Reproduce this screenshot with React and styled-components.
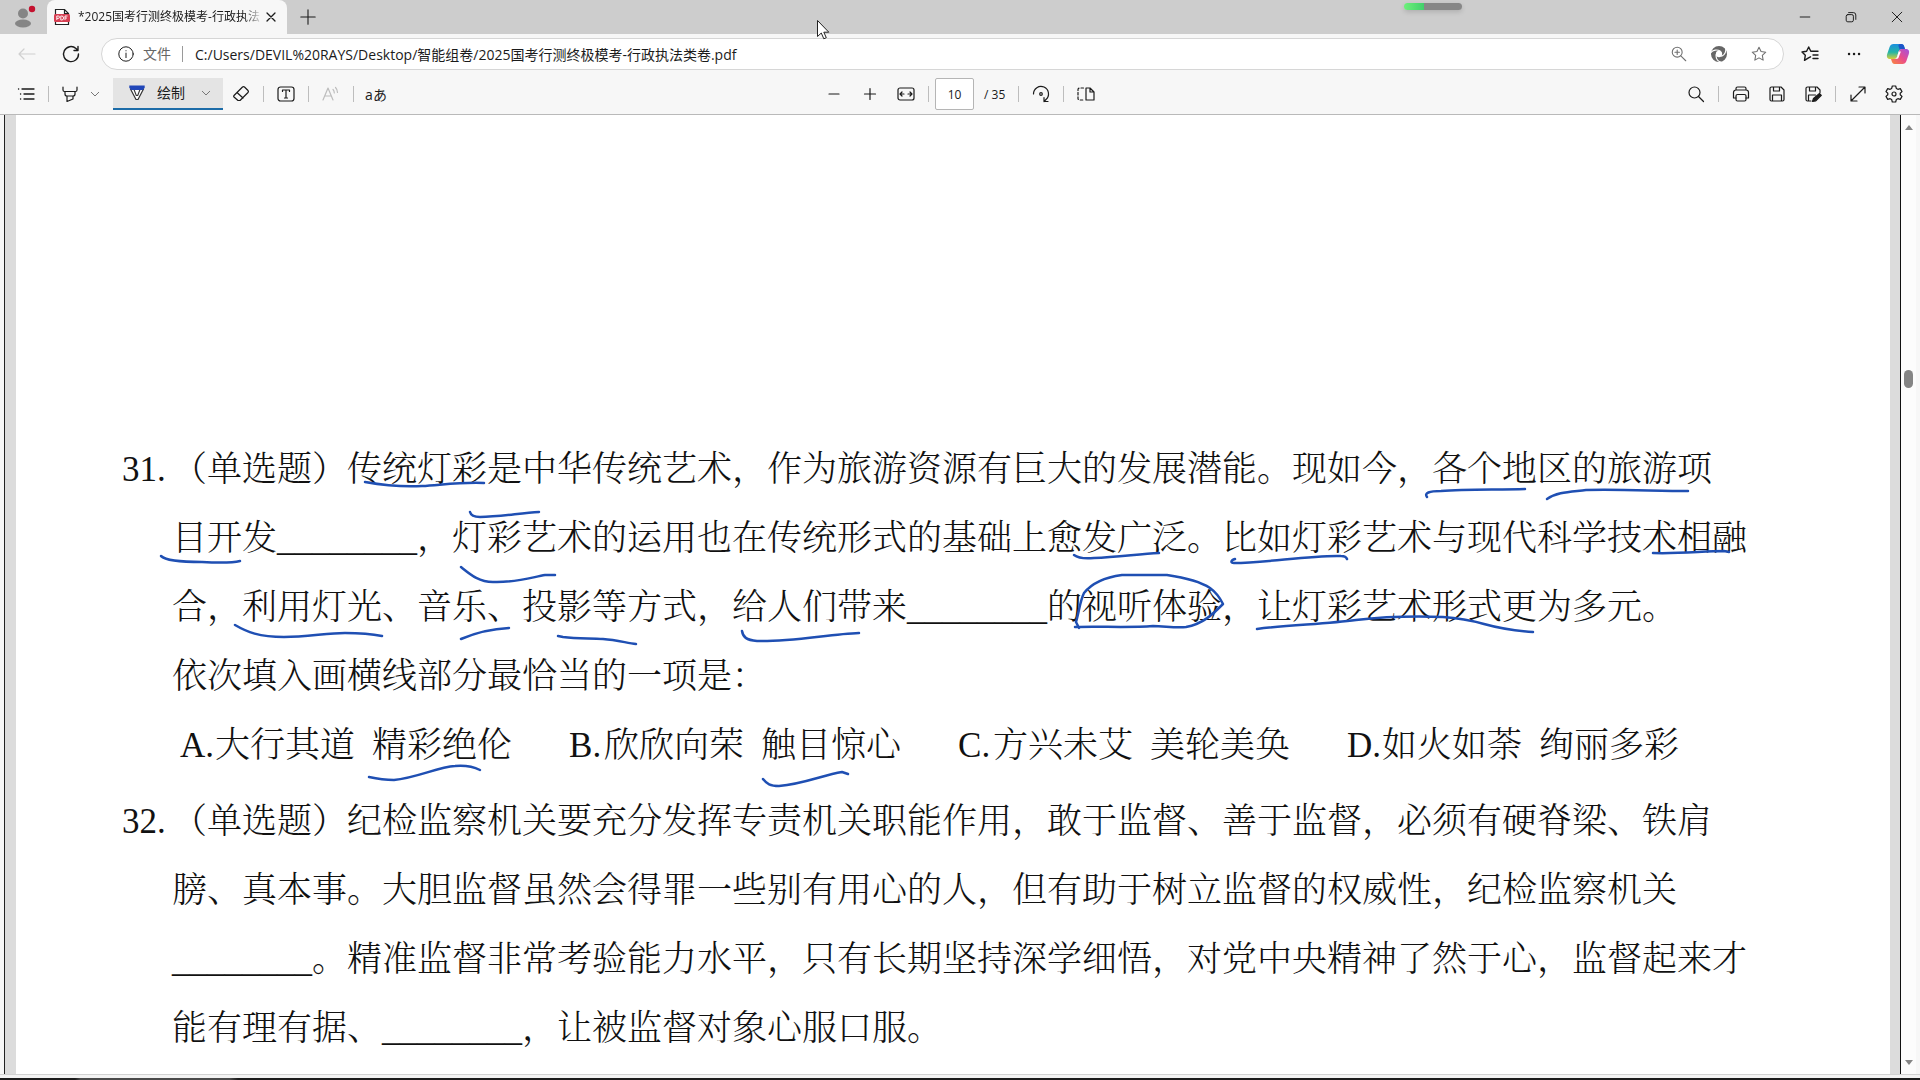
import React from 'react';
import styled, { createGlobalStyle } from 'styled-components';

const GlobalStyle = createGlobalStyle`
    * {
        box-sizing: border-box;
    }
    body {
        margin: 0;
        background: #f7f7f7;
        color: #1b1b1b;
        font-family: "Open Sans", "Noto Sans CJK SC", sans-serif;
        font-size: 14px;
    }
    button, input {
        font: inherit;
        color: inherit;
    }
`;

const Shell = styled.div`
    display: flex;
    flex-direction: column;
    min-height: 100vh;
    position: relative;
    overflow: hidden;
`;

const TitleBar = styled.header`
    display: flex;
    height: 34px;
    background: #cdcdcd;
`;

const PlainButton = styled.button`
    display: flex;
    align-items: center;
    justify-content: center;
    flex: none;
    padding: 0;
    border: 0;
    background: transparent;
    color: ${props => props.$tone || '#1b1b1b'};
`;

const ProfileButton = styled(PlainButton)`
    width: 47px;
`;

const Tab = styled.div`
    display: flex;
    align-items: center;
    width: 240px;
    padding: 0 8px 0 7px;
    background: #f7f7f7;
    border-radius: 8px 8px 0 0;
`;

const TabTitle = styled.span`
    flex: 1;
    margin-left: 8px;
    white-space: nowrap;
    font-size: 12px;
    line-height: 20px;
    mask-image: linear-gradient(to right, #000 90%, transparent);
`;

const NewTabButton = styled(PlainButton)`
    width: 42px;
`;

const WindowControls = styled.div`
    display: flex;
    margin-left: auto;
`;

const WindowButton = styled(PlainButton)`
    width: 46px;
`;

const AddressRow = styled.div`
    display: flex;
    align-items: center;
    gap: 8px;
    height: 38px;
    padding: 2px 4px 0 9px;
`;

const NavButton = styled(PlainButton)`
    width: 36px;
    height: 32px;
`;

const AddressBox = styled.div`
    display: flex;
    align-items: center;
    flex: 1;
    height: 32px;
    margin-left: 4px;
    padding: 0 4px 0 15px;
    background: #fff;
    border: 1px solid #d6d6d6;
    border-radius: 16px;
`;

const Origin = styled.span`
    margin-left: 8px;
    padding-right: 11px;
    border-right: 1px solid #9a9a9a;
    color: #666;
    font-size: 14px;
    line-height: 16px;
`;

const AddressInput = styled.input`
    flex: 1;
    min-width: 0;
    margin-left: 12px;
    padding: 0;
    border: 0;
    outline: 0;
    background: transparent;
    font-size: 14px;
`;

const AddressAction = styled(PlainButton)`
    width: 40px;
    height: 28px;
`;

const ToolBar = styled.div`
    display: grid;
    grid-template-columns: 1fr auto 1fr;
    align-items: center;
    height: 43px;
    padding: 2px 8px 0;
    border-bottom: 1px solid #b9b9b9;
`;

const ToolGroup = styled.div`
    display: flex;
    align-items: center;
    justify-content: ${props => props.$align || 'flex-start'};
`;

const ToolButton = styled(PlainButton)`
    width: 36px;
    height: 32px;
`;

const HighlightButton = styled(ToolButton)`
    width: 34px;
`;

const ChevronButton = styled(PlainButton)`
    width: 16px;
    height: 32px;
    margin-right: 10px;
`;

const DrawButton = styled(PlainButton)`
    justify-content: flex-start;
    gap: 10px;
    width: 110px;
    height: 32px;
    padding: 0 12px 0 14px;
    background: #e4e4e4;
    border-bottom: 2px solid #1c6ca8;
    line-height: 20px;

    & > :last-child {
        margin-left: auto;
    }
`;

const Divider = styled.span`
    width: 1px;
    height: 16px;
    margin: 0 4px;
    background: #bdbdbd;
`;

const PageInput = styled.input`
    width: 39px;
    height: 32px;
    margin-left: 2px;
    padding: 0;
    border: 1px solid #b5b5b5;
    border-radius: 2px;
    background: #fff;
    text-align: center;
    font-size: 12px;
`;

const PageTotal = styled.span`
    width: 40px;
    padding-left: 10px;
    font-size: 12px;
`;

const Viewer = styled.main`
    display: flex;
    flex: 1;
    margin: 0 4px 0 4px;
    border-left: 1px solid #222;
    background: #dcdcdc;
`;

const Page = styled.article`
    flex: 1;
    position: relative;
    margin: 0 10px 0 11px;
    padding: 320px 100px 0 106px;
    background: #fff;
    color: #111;
    font-family: "Liberation Serif", "Noto Serif CJK SC", "Noto Sans CJK SC", serif;
    font-size: 35px;
    font-weight: 300;
    line-height: 69px;
    text-spacing-trim: space-all;
    white-space: nowrap;
`;

const Question = styled.section`
    display: grid;
    grid-template-columns: 50px 1fr;
    margin-bottom: 7px;
`;

const QuestionText = styled.p`
    margin: 0;
`;

const Line = styled.span`
    display: block;
`;

const Options = styled.ul`
    display: flex;
    grid-column: 1 / -1;
    gap: 57px;
    margin: 0;
    padding: 0 0 0 58px;
    list-style: none;
`;

const Option = styled.li`
    display: flex;
`;

const OptionLetter = styled.span`
    width: 35px;
`;

const OptionWord = styled.span`
    margin-right: ${props => (props.$last ? '0' : '17px')};
`;

const Ink = styled.svg`
    position: absolute;
    top: 0;
    left: 0;
    pointer-events: none;
`;

const ScrollBar = styled.div`
    display: flex;
    flex-direction: column;
    align-items: center;
    width: 16px;
    padding: 9px 0 8px;
    background: #fcfcfc;
    border-left: 1px solid #111;
`;

const ScrollThumb = styled.div`
    width: 9px;
    height: 18px;
    margin: 240px 0 auto;
    border-radius: 5px;
    background: #858585;
`;

const BottomEdge = styled.div`
    height: 4px;
    background: #f3f3f3;
    border-top: 1px solid #d2d2d2;
`;

const TaskBarEdge = styled.div`
    height: 2px;
    background: linear-gradient(to right, #1c1c1c 75px, #4a4a4a 80px, #4a4a4a 230px, #1c1c1c 238px);
`;

const Meter = styled.div`
    position: absolute;
    top: 3px;
    left: 1404px;
    width: 58px;
    height: 7px;
    border-radius: 4px;
    background: linear-gradient(to right, #6df07a, #42cf6c 20px, #878787 20px);
    box-shadow: 0 2px 5px rgba(0, 0, 0, 0.15);
`;

const Cursor = styled.svg`
    position: absolute;
    top: 19px;
    left: 816px;
`;

const Icon = ({ size = 20, width = 1.2, children }) => (
    <svg
        width={size}
        height={size}
        viewBox="0 0 20 20"
        fill="none"
        stroke="currentColor"
        strokeWidth={width}
        strokeLinecap="round"
        strokeLinejoin="round"
        aria-hidden="true"
    >
        {children}
    </svg>
);

const Chevron = () => (
    <svg width="10" height="10" viewBox="0 0 10 10" fill="none" stroke="#777" aria-hidden="true">
        <path d="M1 3l4 4 4-4" />
    </svg>
);

const Avatar = () => (
    <svg width="24" height="24" viewBox="0 0 24 24" aria-hidden="true">
        <circle cx="11" cy="8.500" r="5" fill="#858585" />
        <ellipse cx="11" cy="18.500" rx="8" ry="4" fill="#858585" />
        <circle cx="20" cy="4" r="3.200" fill="#c4122f" />
    </svg>
);

const PdfIcon = () => (
    <svg width="16" height="18" viewBox="0 0 16 18" aria-hidden="true">
        <path d="M1.500 16.500v-15h9l4 4v11z" fill="#fff" stroke="#222" strokeWidth="1.200" />
        <path d="M10.500 1.500v4h4" fill="none" stroke="#222" strokeWidth="1.200" />
        <rect x="0" y="6" width="16" height="8" rx="1.500" fill="#d63f52" />
        <path
            d="M2.800 12V8h1.500a1.200 1.200 0 010 2.400H2.800M6.800 8v4h.8a2 2 0 000-4zM11 12V8h2.500M11 10h2"
            fill="none"
            stroke="#fff"
            strokeWidth=".9"
        />
    </svg>
);

const PenIcon = () => (
    <svg width="20" height="20" viewBox="0 0 20 20" strokeLinejoin="round" aria-hidden="true">
        <path d="M3.500 6L9 16.500h2L16.500 6z" fill="#fff" stroke="#333" strokeWidth="1.200" />
        <path d="M7 6.500l2.300 6h1.400l2.300-6" fill="none" stroke="#333" strokeWidth="1.100" />
        <path d="M2.300 2.500h15.400v2.200L16 7H4L2.300 4.700z" fill="#2146b8" />
    </svg>
);

const SwirlIcon = () => (
    <svg width="18" height="18" viewBox="0 0 20 20" aria-hidden="true">
        <circle cx="10" cy="10" r="6.200" fill="none" stroke="currentColor" strokeWidth="5.400" />
        <g fill="none" stroke="#fff" strokeWidth="1.300" strokeLinecap="round">
            <path d="M.8 8.500C3 5.500 8 4.500 11.500 6.800" />
            <path d="M17.300 2.800C18.500 7 16.500 11 13 12.500" />
            <path d="M12.500 19.300C8.500 18 6.300 14.500 6.900 10.500" />
        </g>
    </svg>
);

const CopilotIcon = () => (
    <svg width="24" height="24" viewBox="0 0 24 24" aria-hidden="true">
        <defs>
            <linearGradient id="cool" x1="0" y1="0" x2="0" y2="1">
                <stop offset="0" stopColor="#1b8fe0" />
                <stop offset=".55" stopColor="#25b5a6" />
                <stop offset="1" stopColor="#d8cf38" />
            </linearGradient>
            <linearGradient id="warm" x1="1" y1="0" x2="0" y2="1">
                <stop offset="0" stopColor="#a152e0" />
                <stop offset=".5" stopColor="#ea4b8b" />
                <stop offset="1" stopColor="#f98a3c" />
            </linearGradient>
        </defs>
        <path d="M7.500 2h8c1.500 0 2.200 1 2.600 2.200L19 7h-3c-2 0-2.800 1-3.300 2.600l-1.500 4.600C10.700 16 9.700 17 8 17H4c-3 0-3.600-2.500-2.800-5L3.600 5C4.300 3 5.500 2 7.500 2z" fill="url(#cool)" />
        <path d="M14 2h1.500c1.500 0 2.200 1 2.600 2.200L19 7h-3c-1 0-1.700.3-2.200.9L12.500 4C12.200 3 12.800 2 14 2z" fill="#1d55c8" />
        <path d="M16.500 22h-8C7 22 6.300 21 5.900 19.800L5 17h3c2 0 2.800-1 3.300-2.600l1.500-4.600C13.300 8 14.300 7 16 7h4c3 0 3.600 2.500 2.800 5l-2.400 7c-.7 2-1.900 3-3.900 3z" fill="url(#warm)" />
        <path d="M12.700 9.600h2.200l-2.300 6c-.4 1-1 1.400-2 1.400H9.400c1-.5 1.500-1.400 1.800-2.600z" fill="#fff" />
    </svg>
);

const strokes = [
    'M365 482C382 485 403 487 422 486S460 482 484 483',
    'M470 512C471 516 474 517 480 517C500 517 520 513 539 512',
    'M161 556C166 561 185 562 202 562C220 563 232 563 240 561',
    'M461 567C471 575 479 582 493 582C515 583 533 577 545 575L555 575',
    'M235 625C247 632 259 637 284 637C307 637 327 633 345 633C360 633 372 634 382 636',
    'M461 639C475 633 489 629 509 628',
    'M558 636L563 637C578 639 591 638 603 639C617 640 627 643 636 644',
    'M369 777C378 779 386 780 394 780C416 778 438 767 455 766C466 765 474 767 480 770',
    'M1074 555C1078 558 1084 559 1094 558C1118 557 1139 554 1159 553',
    'M1235 559C1231 560 1230 563 1234 563C1266 563 1310 555 1341 556Q1346 556 1347 559',
    'M742 631C743 637 746 640 757 641C790 642 830 634 859 633',
    'M1079 628L1076 622C1079 612 1080 601 1084 593C1092 583 1107 577 1122 575L1167 575C1187 578 1201 582 1210 588C1217 593 1220 598 1223 604C1213 614 1203 624 1186 627C1175 628 1164 626 1153 626C1128 628 1098 626 1075 627',
    'M1257 629C1287 625 1326 624 1356 620C1382 617 1415 616 1443 617C1459 618 1470 620 1484 624C1502 629 1518 631 1533 632',
    'M763 779C767 784 770 786 779 786C804 784 823 775 842 772L848 774',
    'M1427 497C1424 493 1429 491 1441 491C1467 489 1499 490 1525 489',
    'M1547 499C1557 492 1570 492 1586 490C1618 489 1657 491 1688 491',
    'M1653 553C1679 554 1704 551 1724 551L1729 552',
];

const Annotations = () => (
    <Ink width="1874" height="900" viewBox="16 115 1874 900" aria-hidden="true">
        <g fill="none" stroke="#1f4fb3" strokeWidth="2.500" strokeLinecap="round" strokeLinejoin="round">
            {strokes.map(d => <path key={d} d={d} />)}
        </g>
    </Ink>
);

const questions = [
    {
        number: '31.',
        lines: [
            '（单选题）传统灯彩是中华传统艺术，作为旅游资源有巨大的发展潜能。现如今，各个地区的旅游项',
            '目开发________，灯彩艺术的运用也在传统形式的基础上愈发广泛。比如灯彩艺术与现代科学技术相融',
            '合，利用灯光、音乐、投影等方式，给人们带来________的视听体验，让灯彩艺术形式更为多元。',
            '依次填入画横线部分最恰当的一项是：',
        ],
        options: [
            ['A.', '大行其道', '精彩绝伦'],
            ['B.', '欣欣向荣', '触目惊心'],
            ['C.', '方兴未艾', '美轮美奂'],
            ['D.', '如火如荼', '绚丽多彩'],
        ],
    },
    {
        number: '32.',
        lines: [
            '（单选题）纪检监察机关要充分发挥专责机关职能作用，敢于监督、善于监督，必须有硬脊梁、铁肩',
            '膀、真本事。大胆监督虽然会得罪一些别有用心的人，但有助于树立监督的权威性，纪检监察机关',
            '________。精准监督非常考验能力水平，只有长期坚持深学细悟，对党中央精神了然于心，监督起来才',
            '能有理有据、________，让被监督对象心服口服。',
        ],
    },
];

const BrowserTabs = () => (
    <TitleBar>
        <ProfileButton aria-label="Profile"><Avatar /></ProfileButton>
        <Tab>
            <PdfIcon />
            <TabTitle>*2025国考行测终极模考-行政执法</TabTitle>
            <PlainButton aria-label="Close tab">
                <Icon size={16} width={1.6}><path d="M5 5l10 10M15 5L5 15" /></Icon>
            </PlainButton>
        </Tab>
        <NewTabButton aria-label="New tab">
            <Icon size={18}><path d="M10 2v16M2 10h16" /></Icon>
        </NewTabButton>
        <WindowControls>
            <WindowButton aria-label="Minimize">
                <Icon size={16}><path d="M4 10h12" /></Icon>
            </WindowButton>
            <WindowButton aria-label="Restore">
                <Icon size={16}>
                    <rect x="4" y="7" width="9" height="9" rx="2" />
                    <path d="M7 4.500h6a3 3 0 013 3V13" />
                </Icon>
            </WindowButton>
            <WindowButton aria-label="Close">
                <Icon size={16}><path d="M4 4l12 12M16 4L4 16" /></Icon>
            </WindowButton>
        </WindowControls>
    </TitleBar>
);

const starPath = 'M10 2.500l2.300 4.800 5.200.7-3.800 3.600.9 5.200-4.600-2.500-4.600 2.500.9-5.200L2.500 8l5.200-.7z';

const AddressBar = () => (
    <AddressRow>
        <NavButton aria-label="Back" $tone="#d0d0d0">
            <Icon><path d="M18 10H2M7 5l-5 5 5 5" /></Icon>
        </NavButton>
        <NavButton aria-label="Refresh">
            <Icon width={1.4}><path d="M17.500 10a7.500 7.500 0 11-2.500-5.500L17 6.500M17 2.500v4h-4" /></Icon>
        </NavButton>
        <AddressBox>
            <Icon size={18} width={1.1}>
                <circle cx="10" cy="10" r="8" />
                <path d="M10 9v5M10 6.300v.2" />
            </Icon>
            <Origin>文件</Origin>
            <AddressInput
                aria-label="Address"
                defaultValue="C:/Users/DEVIL%20RAYS/Desktop/智能组卷/2025国考行测终极模考-行政执法类卷.pdf"
            />
            <AddressAction aria-label="Zoom" $tone="#707070">
                <Icon size={18}>
                    <circle cx="8" cy="8" r="5.500" />
                    <path d="M12 12l5.500 5.500M8 5.500v5M5.500 8h5" />
                </Icon>
            </AddressAction>
            <AddressAction aria-label="Internet Explorer mode" $tone="#666"><SwirlIcon /></AddressAction>
            <AddressAction aria-label="Add to favorites" $tone="#707070">
                <Icon size={18}><path d={starPath} /></Icon>
            </AddressAction>
        </AddressBox>
        <NavButton aria-label="Favorites">
            <Icon width={1.4}>
                <path d="M10.500 12.800L8.500 13.800l-4 2.500.8-5L2 8l4.600-.7L8.700 3l2.100 4.300H18M13 11h5M13 14.500h5" />
            </Icon>
        </NavButton>
        <NavButton aria-label="Settings and more">
            <Icon width={2.4}><path d="M5 10h.1M10 10h.1M15 10h.1" /></Icon>
        </NavButton>
        <NavButton aria-label="Copilot"><CopilotIcon /></NavButton>
    </AddressRow>
);

const PdfToolBar = () => (
    <ToolBar>
        <ToolGroup>
            <ToolButton aria-label="Contents">
                <Icon width={1.3}>
                    <path d="M6 5h12M8 10h10M8 15h10M2.500 5h.2M4.500 10h.2M4.500 15h.2" />
                </Icon>
            </ToolButton>
            <Divider />
            <HighlightButton aria-label="Highlight">
                <Icon>
                    <path d="M3 3v3a1.500 1.500 0 001.500 1.500h11A1.500 1.500 0 0017 6V3M5 7.500V10a2 2 0 002 2h6a2 2 0 002-2V7.500M7 12v5.500l6-2.500v-3" />
                </Icon>
            </HighlightButton>
            <ChevronButton aria-label="Highlight options"><Chevron /></ChevronButton>
            <DrawButton>
                <PenIcon />
                <span>绘制</span>
                <Chevron />
            </DrawButton>
            <ToolButton aria-label="Erase">
                <Icon>
                    <path d="M3 11.500l8.500-8.500a1.500 1.500 0 012 0L17 6.500a1.500 1.500 0 010 2L9 16.500H7L3 13a1 1 0 010-1.500zM6 8.500l6 5.500" />
                </Icon>
            </ToolButton>
            <Divider />
            <ToolButton aria-label="Add text">
                <Icon>
                    <rect x="2" y="3" width="16" height="14" rx="2.500" />
                    <path d="M6.500 7.500V6h7v1.500M10 6v8M8.500 14h3" />
                </Icon>
            </ToolButton>
            <Divider />
            <ToolButton aria-label="Read aloud" $tone="#bdbdbd">
                <Icon><path d="M2 16L7 4l5 12M4 12h6M12 5.500c1 1 1.300 2 1.300 3.500M14.500 3.500c1.500 1.500 2 3 2 5" /></Icon>
            </ToolButton>
            <Divider />
            <ToolButton aria-label="Translate">aあ</ToolButton>
        </ToolGroup>
        <ToolGroup>
            <ToolButton aria-label="Zoom out"><Icon><path d="M5 10h10" /></Icon></ToolButton>
            <ToolButton aria-label="Zoom in"><Icon><path d="M10 4.500v11M4.500 10h11" /></Icon></ToolButton>
            <ToolButton aria-label="Fit to width">
                <Icon>
                    <rect x="2" y="4" width="16" height="12" rx="2" />
                    <path d="M8 10H4.500M6 8l-2 2 2 2M12 10h3.500M14 8l2 2-2 2" />
                </Icon>
            </ToolButton>
            <Divider />
            <PageInput aria-label="Page number" defaultValue="10" />
            <PageTotal>/ 35</PageTotal>
            <Divider />
            <ToolButton aria-label="Rotate">
                <Icon>
                    <path d="M2.500 10a7.500 7.500 0 1112.500 5.500L13 17.500M13 13.500v4h4" />
                    <circle cx="10" cy="10" r="1.300" />
                </Icon>
            </ToolButton>
            <Divider />
            <ToolButton aria-label="Page view">
                <Icon>
                    <path d="M10 4h4l4 4v8h-8zM14 4v4h4" />
                    <path d="M7.500 4H3.500A1.500 1.500 0 002 5.500v9A1.500 1.500 0 003.500 16h4" strokeDasharray="2.500 2" />
                </Icon>
            </ToolButton>
        </ToolGroup>
        <ToolGroup $align="flex-end">
            <ToolButton aria-label="Search">
                <Icon><circle cx="8.500" cy="8.500" r="5.500" /><path d="M12.500 12.500l5 5" /></Icon>
            </ToolButton>
            <Divider />
            <ToolButton aria-label="Print">
                <Icon>
                    <path d="M5 6V4.500A1.500 1.500 0 016.500 3h7A1.500 1.500 0 0115 4.500V6M5 14H2.500V8.500A2.500 2.500 0 015 6h10a2.500 2.500 0 012.500 2.500V14H15" />
                    <rect x="5" y="10.500" width="10" height="6.500" rx="1.500" />
                </Icon>
            </ToolButton>
            <ToolButton aria-label="Save">
                <Icon>
                    <path d="M3 4.500A1.500 1.500 0 014.500 3H14l3 3v9.500a1.500 1.500 0 01-1.500 1.500h-11A1.500 1.500 0 013 15.500zM6.500 3v4h6V3M5.500 17v-6h9v6" />
                </Icon>
            </ToolButton>
            <ToolButton aria-label="Save as">
                <Icon>
                    <path d="M8 17H4.500A1.500 1.500 0 013 15.500v-11A1.500 1.500 0 014.500 3H14l3 3v2.500M6.500 3v4h6V3M5.500 17v-6h7" />
                    <path d="M9.500 17.500l1-3 6-5 1.800 1.800-5.500 5.500z" fill="currentColor" />
                </Icon>
            </ToolButton>
            <Divider />
            <ToolButton aria-label="Full screen">
                <Icon><path d="M3.500 16.500l13-13M11 3h6v6M3 11v6h6" /></Icon>
            </ToolButton>
            <ToolButton aria-label="PDF settings">
                <Icon>
                    <path d="M8.300 2h3.400l.6 2.400 1.600.9 2.400-.7 1.700 3-1.800 1.700v1.400l1.800 1.700-1.700 3-2.400-.7-1.600.9-.6 2.400H8.300l-.6-2.400-1.600-.9-2.400.7-1.700-3 1.800-1.700V9.300L2 7.600l1.700-3 2.400.7 1.600-.9z" />
                    <circle cx="10" cy="10" r="2" />
                </Icon>
            </ToolButton>
        </ToolGroup>
    </ToolBar>
);

const App = () => {
    return (
        <>
            <GlobalStyle />
            <Shell>
                <BrowserTabs />
                <AddressBar />
                <PdfToolBar />
                <Viewer>
                    <Page>
                        {questions.map(question => (
                            <Question key={question.number}>
                                <span>{question.number}</span>
                                <QuestionText>
                                    {question.lines.map(line => <Line key={line}>{line}</Line>)}
                                </QuestionText>
                                {question.options && (
                                    <Options>
                                        {question.options.map(([letter, first, second]) => (
                                            <Option key={letter}>
                                                <OptionLetter>{letter}</OptionLetter>
                                                <OptionWord>{first}</OptionWord>
                                                <OptionWord $last>{second}</OptionWord>
                                            </Option>
                                        ))}
                                    </Options>
                                )}
                            </Question>
                        ))}
                        <Annotations />
                    </Page>
                    <ScrollBar>
                        <svg width="10" height="6" viewBox="0 0 10 6" aria-hidden="true">
                            <path d="M1 6l4-5 4 5z" fill="#858585" />
                        </svg>
                        <ScrollThumb />
                        <svg width="10" height="6" viewBox="0 0 10 6" aria-hidden="true">
                            <path d="M1 0l4 5 4-5z" fill="#858585" />
                        </svg>
                    </ScrollBar>
                </Viewer>
                <BottomEdge />
                <TaskBarEdge />
                <Meter />
                <Cursor width="14" height="22" viewBox="0 0 14 22" aria-hidden="true">
                    <path d="M1.500 1.500v16l3.800-3.500 2.500 5.800 2.500-1.100-2.500-5.500h5z" fill="#fff" stroke="#222" />
                </Cursor>
            </Shell>
        </>
    );
};

export default App;
